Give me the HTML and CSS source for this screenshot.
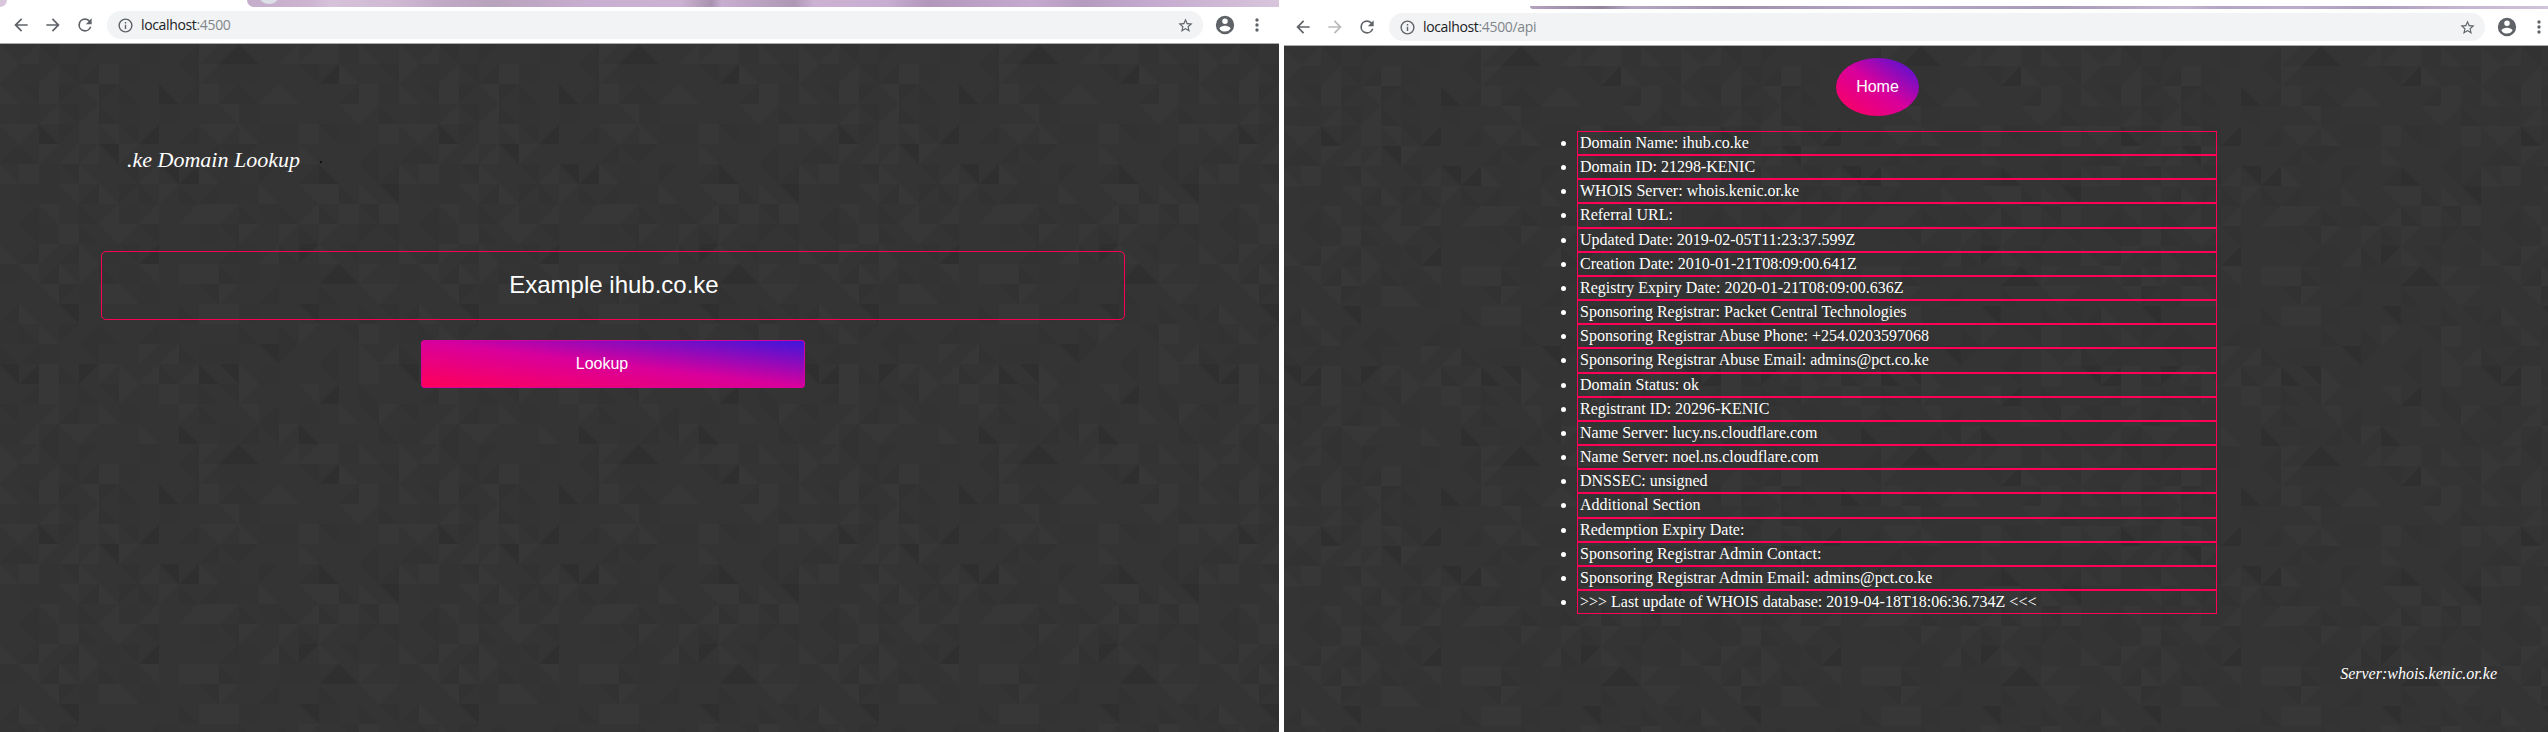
FILE: index.html
```html
<!DOCTYPE html>
<html lang="en">
<head>
<meta charset="utf-8">
<title>.ke Domain Lookup</title>
<link rel="stylesheet" href="styles.css">
</head>
<body>
<svg class="defs" aria-hidden="true">
  <symbol id="back" viewBox="0 0 24 24"><path d="M20 11H7.83l5.59-5.59L12 4l-8 8 8 8 1.41-1.41L7.83 13H20v-2z"/></symbol>
  <symbol id="forward" viewBox="0 0 24 24"><path d="M12 4l-1.41 1.41L16.17 11H4v2h12.17l-5.58 5.59L12 20l8-8z"/></symbol>
  <symbol id="reload" viewBox="0 0 24 24"><path d="M17.65 6.35A7.96 7.96 0 0 0 12 4a8 8 0 1 0 7.73 10h-2.08A6 6 0 1 1 12 6c1.66 0 3.14.69 4.22 1.78L13 11h7V4z"/></symbol>
  <symbol id="info" viewBox="0 0 24 24"><path d="M11 17h2v-6h-2v6zm1-15a10 10 0 1 0 0 20 10 10 0 0 0 0-20zm0 18a8 8 0 1 1 0-16 8 8 0 0 1 0 16zM11 9h2V7h-2v2z"/></symbol>
  <symbol id="star" viewBox="0 0 24 24"><path d="M22 9.24l-7.19-.62L12 2 9.19 8.63 2 9.24l5.46 4.73L5.82 21 12 17.27 18.18 21l-1.63-7.03zM12 15.4l-3.76 2.27 1-4.28-3.32-2.88 4.38-.38L12 6.1l1.71 4.04 4.38.38-3.32 2.88 1 4.28z"/></symbol>
  <symbol id="user" viewBox="0 0 24 24"><path d="M12 2a10 10 0 1 0 0 20 10 10 0 0 0 0-20zm0 3a3 3 0 1 1 0 6 3 3 0 0 1 0-6zm0 14.2a7.2 7.2 0 0 1-6-3.22c.03-1.99 4-3.08 6-3.08s5.97 1.09 6 3.08a7.2 7.2 0 0 1-6 3.22z"/></symbol>
  <symbol id="more" viewBox="0 0 24 24"><path d="M12 8a2 2 0 1 0 0-4 2 2 0 0 0 0 4zm0 2a2 2 0 1 0 0 4 2 2 0 0 0 0-4zm0 6a2 2 0 1 0 0 4 2 2 0 0 0 0-4z"/></symbol>
  <pattern id="tiles-left" class="tiles" width="400" height="400" patternUnits="userSpaceOnUse" patternTransform="translate(-1 0)"></pattern>
  <pattern id="tiles-right" class="tiles" width="400" height="400" patternUnits="userSpaceOnUse" patternTransform="translate(-3 0)"></pattern>
</svg>
<main class="windows">
  <section class="window">
    <div class="tabs"><i class="edge"></i><i class="active"></i><i class="strip"><b class="dot"></b></i></div>
    <header class="toolbar">
      <nav class="nav"><svg><use href="#back"/></svg><svg><use href="#forward"/></svg><svg><use href="#reload"/></svg></nav>
      <div class="address"><svg class="info"><use href="#info"/></svg><span class="url">localhost<span class="path">:4500</span></span><svg class="star"><use href="#star"/></svg></div>
      <svg class="user"><use href="#user"/></svg><svg class="more"><use href="#more"/></svg>
    </header>
    <div class="page">
      <svg class="texture"><rect width="100%" height="100%" fill="url(#tiles-left)"/></svg>
      <div class="lookup">
        <h1 class="title">.ke Domain Lookup<i class="speck"></i></h1>
        <div class="field">Example ihub.co.ke</div>
        <button class="submit">Lookup</button>
      </div>
    </div>
  </section>
  <section class="window api">
    <div class="tabs"><i class="strip"></i></div>
    <header class="toolbar">
      <nav class="nav"><svg><use href="#back"/></svg><svg class="off"><use href="#forward"/></svg><svg><use href="#reload"/></svg></nav>
      <div class="address"><svg class="info"><use href="#info"/></svg><span class="url">localhost<span class="path">:4500/api</span></span><svg class="star"><use href="#star"/></svg></div>
      <svg class="user"><use href="#user"/></svg><svg class="more"><use href="#more"/></svg>
    </header>
    <div class="page">
      <svg class="texture"><rect width="100%" height="100%" fill="url(#tiles-right)"/></svg>
      <div class="result">
        <button class="home">Home</button>
        <ul class="records">
          <li>Domain Name: ihub.co.ke</li>
          <li>Domain ID: 21298-KENIC</li>
          <li>WHOIS Server: whois.kenic.or.ke</li>
          <li>Referral URL:</li>
          <li>Updated Date: 2019-02-05T11:23:37.599Z</li>
          <li>Creation Date: 2010-01-21T08:09:00.641Z</li>
          <li>Registry Expiry Date: 2020-01-21T08:09:00.636Z</li>
          <li>Sponsoring Registrar: Packet Central Technologies</li>
          <li>Sponsoring Registrar Abuse Phone: +254.0203597068</li>
          <li>Sponsoring Registrar Abuse Email: admins@pct.co.ke</li>
          <li>Domain Status: ok</li>
          <li>Registrant ID: 20296-KENIC</li>
          <li>Name Server: lucy.ns.cloudflare.com</li>
          <li>Name Server: noel.ns.cloudflare.com</li>
          <li>DNSSEC: unsigned</li>
          <li>Additional Section</li>
          <li>Redemption Expiry Date:</li>
          <li>Sponsoring Registrar Admin Contact:</li>
          <li>Sponsoring Registrar Admin Email: admins@pct.co.ke</li>
          <li>&gt;&gt;&gt; Last update of WHOIS database: 2019-04-18T18:06:36.734Z &lt;&lt;&lt;</li>
        </ul>
        <p class="server">Server:whois.kenic.or.ke</p>
      </div>
    </div>
  </section>
</main>
<script src="tiles.js"></script>
</body>
</html>
```
FILE: styles.css
```css
* { box-sizing: border-box; }
html, body { height: 732px; overflow: hidden; }
body { margin: 0; background: #fff; }
.defs { position: absolute; width: 0; height: 0; }
.windows { display: flex; gap: 5px; width: 2548px; height: 732px; overflow: hidden; }
.window { display: flex; flex-direction: column; width: 1279px; flex: none; }
.api { width: 1264px; overflow: hidden; }

.tabs { display: flex; height: 7px; overflow: hidden; flex: none; }
.edge { width: 7px; background: #d8c7dc; border-bottom-right-radius: 7px; }
.active { width: 240px; }
.strip { flex: 1; border-bottom-left-radius: 8px; background: linear-gradient(90deg, #c5aecb, #cdb4d1 6%, #d6c2d9 8%, #d0bad4 14%, #c0a9c5 19%, #b8a3bc 24%, #c8aed0 33%, #ccb2d2 42%, #a993b0 45%, #c8aed0 46%, #ae98b5 53%, #ccb1d3 55%, #c8aed0 62%, #b297bb 66%, #c6a9cf 76%, #b59cbe 81%, #c4a9ce 87%, #d8c5dc); }
.dot { display: block; width: 22px; height: 22px; margin: -18px 0 0 11px; border-radius: 50%; background: #dce0e6; }
.api .tabs { height: 9px; padding: 6px 0 0 246px; }
.api .strip { border-bottom-left-radius: 3px; background: linear-gradient(90deg, #b4a1be, #93849c 7%, #b5a7c4 10%, #9f8fac 20%, #b7a8c8 35%, #a799b8 52%, #c4b5cf 64%, #b3a5c4 68%, #bcaccb 75%, #ac9cbd 83%, #c5b6d1 92%, #cfc4d9); }

.toolbar { display: flex; align-items: center; height: 37px; padding-left: 11px; background: #fff; border-bottom: 1px solid #a9acab; fill: #5f6368; flex: none; }
.api .toolbar { padding-left: 9px; }
.nav { display: flex; gap: 12px; width: 96px; flex: none; }
.nav svg { width: 20px; height: 20px; }
.nav .off { fill: #bababa; }
.address { display: flex; align-items: center; width: 1096px; height: 28px; padding: 0 9px 0 10px; border-radius: 14px; background: #f1f3f4; flex: none; }
.info { width: 17px; height: 17px; }
.url { flex: 1; margin-left: 7px; font: 14px/18px "Open Sans", "Noto Sans", sans-serif; letter-spacing: -0.35px; color: #202124; }
.path { color: #80868b; }
.star { width: 17px; height: 17px; }
.user { width: 22px; height: 22px; margin-left: 11px; flex: none; }
.more { width: 20px; height: 20px; margin-left: 11px; flex: none; }

.page { display: grid; flex: 1; background: #343434; color: #fff; min-height: 0; overflow: hidden; }
.page > * { grid-area: 1 / 1; min-width: 0; min-height: 0; }
.texture { width: 100%; height: 100%; }
.darkest { fill: #2f2f2f; }
.dark { fill: #323232; }
.flat { fill: #333; }
.light { fill: #373737; }

.lookup { padding: 100px 154px 0 101px; z-index: 1; }
.title { display: flex; align-items: center; height: 32px; margin: 0 0 75px; padding-left: 26px; font: italic 22px/32px "Liberation Serif", serif; }
.speck { width: 2px; height: 2px; margin: 3px 0 0 20px; background: #111; }
.field { height: 69px; padding-left: 2px; border: 1px solid #f70058; border-radius: 5px; font: 24px/65px "Liberation Sans", sans-serif; text-align: center; }
.submit { display: block; width: 384px; height: 48px; margin: 20px 0 0 320px; padding: 0 22px 0 0; border: 1px solid #d6009e; border-radius: 3px; background: linear-gradient(to top right, #ff0059, #d8009c 50%, #3f16dc); color: #fff; font: 16px "Liberation Sans", sans-serif; }

.result { z-index: 1; padding-top: 12px; }
.home { display: block; width: 83px; height: 58px; margin: 0 0 15px 552px; padding: 0; border: 0; border-radius: 50%; background: linear-gradient(to top right, #ff0059, #d8009c 50%, #3f16dc); color: #fff; font: 16px "Liberation Sans", sans-serif; }
.records { width: 640px; margin: 0 0 0 293px; padding: 0; font: 16px/22px "Liberation Serif", serif; }
.records li { height: 24.16px; padding-left: 2px; border: 1px solid #ff0059; }
.server { margin: 49px 51px 0 0; text-align: right; font: italic 16px/22px "Liberation Serif", serif; }
```
FILE: tiles.js
```js
// One character per 20px cell: corner triangles, full squares, or a plain cell.
const rows = [
  'ghw.q..x.stSA.hhoxg.',
  'txhwsox..wtxx..wSg.w',
  'gwoqyqa.Asosahg..sox',
  '.xhwhax.x..yx....yta',
  'ytAqoywS.sytgxxowx.o',
  'sathhWt...swq..g..s.',
  'goxwg.whWSgx.q.sA.ws',
  '.xxysgqatasxxg.yoagW',
  '.sy.ahxh.hotaxahaowo',
  '.wxoaytw..xwt.tat.qw',
  'gstsgxwS...sxhaQgw.x',
  'xysgtaxy.ooax.xxSAt.',
  '..yqxogx..wt.s..a.yt',
  'sg.W.....aoox..Wx.aw',
  'xagqsa.sx...a.at.wo.',
  'asx.w..thaxx.Wq.s.gh',
  'WSoaQtghahAWgx..w.o.',
  '.so.awt.o.awt..yS.a.',
  'w.hs.gx..ta.ys.x.gwt',
  'xhsyt..g.A.xswtA...a'
];

// Paths drawn from the top-left corner of a cell.
const shapes = {
  q: 'h20l-20 20z',
  w: 'h20v20z',
  a: 'v20h20z',
  s: 'm20 0v20h-20z',
  full: 'h20v20h-20z'
};

// Cell character -> [shape, shade]; capitals are the darkest triangles.
const cells = {
  t: ['q', 'light'], y: ['w', 'light'], g: ['a', 'light'], h: ['s', 'light'],
  o: ['full', 'light'], x: ['full', 'flat']
};
for (const corner of 'qwas') {
  cells[corner] = [corner, 'dark'];
  cells[corner.toUpperCase()] = [corner, 'darkest'];
}

const paths = { darkest: '', dark: '', flat: '', light: '' };
rows.forEach((row, y) => [...row].forEach((c, x) => {
  if (!cells[c]) return;
  const [shape, shade] = cells[c];
  paths[shade] += `M${x * 20} ${y * 20}${shapes[shape]}`;
}));

document.querySelectorAll('.tiles').forEach(p => {
  p.innerHTML = Object.entries(paths).map(([k, d]) => `<path class="${k}" d="${d}"/>`).join('');
});
```
